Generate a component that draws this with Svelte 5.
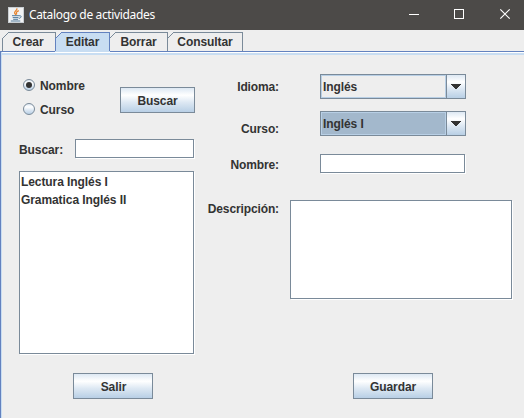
<script>
  const tabs = [
    { name: 'Crear', width: 53 },
    { name: 'Editar', width: 54 },
    { name: 'Borrar', width: 58 },
    { name: 'Consultar', width: 75 }
  ];
  let active = $state('Editar');
  let mode = $state('Nombre');
  const items = ['Lectura Inglés I', 'Gramatica Inglés II'];
</script>

{#snippet combo(value, focused)}
  <div class="combo" class:focused>
    <span class="value">{value}</span>
    <span class="arrow">
      <svg width="10" height="5" viewBox="0 0 10 5" shape-rendering="crispEdges"><path d="M0 0h10v1h-1v1h-1v1h-1v1h-1v1h-2v-1h-1v-1h-1v-1h-1v-1h-1z" fill="#333" /></svg>
    </span>
  </div>
{/snippet}

<div class="window">
  <header>
    <svg class="java" width="16" height="16" viewBox="0 0 16 16">
      <rect x="0.5" y="0.5" width="15" height="15" fill="#f1f2f3" stroke="#c9ced2" />
      <path d="M8.8 1.2C10 3.2 5.8 4.2 6.6 6.2L8 8.2M10.8 3.6C8 5 7.8 6 9 7.3" fill="none" stroke="#e8842c" stroke-width="1.2" />
      <path d="M4 8.7h7.2M4.7 10.6h5.8M5.2 12.3h4.8M2.8 14h9.5M11 8.8c3.2-.5 2.6 2-.2 2.7" fill="none" stroke="#527b9b" stroke-width="1" />
    </svg>
    <h1>Catalogo de actividades</h1>
    <svg class="controls" width="110" height="30" viewBox="0 0 110 30" fill="none" stroke="#fff">
      <path d="M0 14.5h10" shape-rendering="crispEdges" />
      <rect x="45.5" y="9.5" width="9" height="9" shape-rendering="crispEdges" />
      <path d="M91.3 9.3l9.4 9.4M100.7 9.3l-9.4 9.4" stroke-width="1.2" />
    </svg>
  </header>

  <nav>
    {#each tabs as tab}
      <button class="tab" class:active={tab.name === active} style="width: {tab.width}px" onclick={() => (active = tab.name)}>
        <svg width={tab.width + 1} height="19" viewBox="0 0 {tab.width + 1} 19" shape-rendering="crispEdges">
          <path d="M.5 19V6.5L6.5 .5H{tab.width + 0.5}V19" />
        </svg>
        <span>{tab.name}</span>
      </button>
    {/each}
  </nav>

  <main>
    <section class="left">
      <div class="search">
        <div class="radios">
          {#each ['Nombre', 'Curso'] as option}
            <button class="radio" onclick={() => (mode = option)}>
              <i class:on={mode === option}></i><span>{option}</span>
            </button>
          {/each}
        </div>
        <button class="btn find">Buscar</button>
      </div>
      <div class="query"><span>Buscar:</span><div class="field"></div></div>
      <div class="field list">
        {#each items as item}<div>{item}</div>{/each}
      </div>
      <button class="btn exit">Salir</button>
    </section>

    <section class="right">
      <div class="row idioma"><span class="label">Idioma:</span>{@render combo('Inglés', false)}</div>
      <div class="row curso"><span class="label">Curso:</span>{@render combo('Inglés I', true)}</div>
      <div class="row nombre"><span class="label">Nombre:</span><div class="field"></div></div>
      <div class="row desc"><span class="label">Descripción:</span><div class="field area"></div></div>
      <button class="btn save">Guardar</button>
    </section>
  </main>
</div>

<style>
  :global(body) { margin: 0; overflow: hidden; }
  .window {
    width: 524px; height: 418px; box-sizing: border-box; overflow: hidden;
    display: flex; flex-direction: column; background: #eee; color: #333;
    font: bold 12px/16px "Liberation Sans", Arial, sans-serif;
    letter-spacing: -0.08px;
  }
  .window * { box-sizing: border-box; }
  button { font: inherit; color: inherit; letter-spacing: inherit; padding: 0; border: 0; background: none; }
  header { height: 30px; flex: none; display: flex; align-items: center; background: #4c4a48; color: #fff; padding-left: 8px; }
  .java { margin-top: -1px; }
  h1 { margin: 0 0 0 5px; font: 12px/16px "Noto Sans", "Open Sans", sans-serif; letter-spacing: -0.35px; white-space: nowrap; }
  .controls { margin-left: auto; margin-right: 5px; }

  nav { height: 22px; flex: none; display: flex; padding: 2px 0 0 2px; border-bottom: 1px solid #6382bf; }
  .tab { display: grid; height: 19px; flex: none; grid-template-columns: 100%; }
  .tab > * { grid-area: 1 / 1; }
  .tab span { text-align: center; line-height: 19px; z-index: 1; padding: 1px 0 0 1px; }
  .tab:first-child span { padding: 1px 1px 0 0; }
  .tab path { fill: #eee; stroke: #7a8a99; }
  .tab.active { height: 20px; z-index: 1; }
  .tab.active path { fill: #c8ddf2; stroke: #6382bf; }
  .tab.active svg { box-shadow: 0 1px #c8ddf2; }

  main { flex: 1; display: flex; border-left: 1px solid #6382bf; box-shadow: inset 1px 0 #c8ddf2, inset 0 1px #fff, inset 0 3px #c8ddf2; }
  .left { width: 176px; margin-left: 18px; display: flex; flex-direction: column; }
  .search { margin-top: 24px; height: 44px; display: flex; }
  .radios { width: 97px; margin-left: 4px; display: flex; flex-direction: column; gap: 6px; }
  .radio { height: 18px; display: flex; align-items: center; gap: 5px; }
  .radio span { padding-top: 2px; }
  i { width: 12px; height: 12px; border: 1px solid #7a8a99; border-radius: 50%; background: linear-gradient(#dde8f3, #fff 30%, #dde8f3 60%, #b8cfe5); display: grid; place-items: center; }
  i.on::after { content: ""; width: 6px; height: 6px; border-radius: 50%; background: #333; }
  .btn { height: 26px; border: 1px solid #7a8a99; background: linear-gradient(#dde8f3, #fff 30%, #dde8f3 60%, #b8cfe5); text-align: center; padding-top: 2px; }
  .find { width: 75px; margin-top: 11px; }
  .field { background: #fff; border: 1px solid #7a8a99; box-shadow: 1px 1px #fff; }
  .query { display: flex; align-items: center; justify-content: space-between; margin-top: 19px; height: 19px; }
  .query span { padding-top: 2px; }
  .query .field { width: 119px; height: 19px; margin-right: 1px; }
  .list { width: 175px; height: 183px; margin-top: 13px; padding: 1px; }
  .list div { height: 18px; line-height: 18px; }
  .exit { width: 80px; margin: 19px 0 0 54px; padding-left: 1px; }

  .right { flex: 1; display: flex; flex-direction: column; }
  .row { display: flex; }
  .label { width: 84px; text-align: right; white-space: nowrap; letter-spacing: -0.12px; }
  .combo { width: 146px; height: 25px; margin-left: 41px; display: flex; border: 1px solid #7a8a99; }
  .value { width: 125px; border: 1px solid #b8cfe5; padding: 0 1px; line-height: 22px; }
  .focused .value { background: #a3b8cc; }
  .arrow { flex: 1; display: grid; place-items: center; border-left: 1px solid #7a8a99; background: linear-gradient(#dde8f3, #fff 30%, #dde8f3 60%, #b8cfe5); }
  .idioma { margin-top: 22px; }
  .idioma .label { padding-top: 5px; }
  .curso { margin-top: 12px; }
  .curso .label { padding-top: 10px; }
  .nombre { margin-top: 17px; height: 19px; }
  .nombre .label { padding-top: 3px; }
  .nombre .field { width: 145px; margin-left: 41px; }
  .desc { margin-top: 27px; height: 99px; }
  .desc .label { padding-top: 1px; }
  .area { width: 222px; margin-left: 11px; }
  .save { width: 80px; margin: 74px 0 0 158px; }
</style>
